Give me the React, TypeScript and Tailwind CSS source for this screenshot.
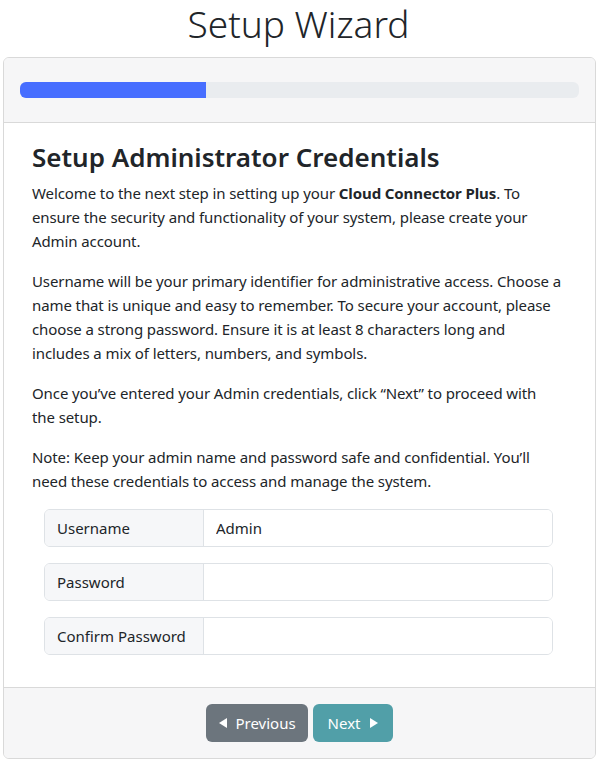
import React from "react";

const fields = [
  { label: "Username", value: "Admin", type: "text" },
  { label: "Password", value: "", type: "password" },
  { label: "Confirm Password", value: "", type: "password" },
];

function Triangle({ dir }: { dir: "left" | "right" }) {
  return (
    <svg width="8" height="10" viewBox="0 0 8 10" className="inline-block" fill="currentColor">
      {dir === "left" ? <path d="M8 0 L0 5 L8 10 Z" /> : <path d="M0 0 L8 5 L0 10 Z" />}
    </svg>
  );
}

export default function App() {
  return (
    <div
      className="min-h-[760px] bg-white text-[#212529]"
      style={{ fontFamily: '"Noto Sans", "Open Sans", sans-serif' }}
    >
      <h1 className="text-center text-[37px] leading-[48px] font-light mb-[9px]">Setup Wizard</h1>

      <div className="ml-[3px] mr-[1px] border border-[#d9d9d9] rounded-md overflow-hidden">
        {/* progreso */}
        <div className="bg-[#f6f6f7] px-4 py-6 border-b border-[#d9d9d9]">
          <div className="h-4 rounded-md bg-[#e9ecef] overflow-hidden">
            <div className="h-full w-1/3 bg-[#476eff]" />
          </div>
        </div>

        <div className="bg-white px-7 pt-[18px] pb-4">
          <h2 className="text-[26px] leading-8 font-semibold mb-2">Setup Administrator Credentials</h2>
          <div className="text-[15px] leading-6 tracking-[-0.1px]">
            <p className="mb-4">
              Welcome to the next step in setting up your <strong className="font-bold">Cloud Connector Plus</strong>. To
              <br />
              ensure the security and functionality of your system, please create your
              <br />
              Admin account.
            </p>
            <p className="mb-4">
              Username will be your primary identifier for administrative access. Choose a
              <br />
              name that is unique and easy to remember. To secure your account, please
              <br />
              choose a strong password. Ensure it is at least 8 characters long and
              <br />
              includes a mix of letters, numbers, and symbols.
            </p>
            <p className="mb-4">
              Once you’ve entered your Admin credentials, click “Next” to proceed with
              <br />
              the setup.
            </p>
            <p className="mb-4">
              Note: Keep your admin name and password safe and confidential. You’ll
              <br />
              need these credentials to access and manage the system.
            </p>
          </div>

          <div className="pl-3 pr-[14px] flex flex-col gap-4 mb-4">
            {fields.map((f) => (
              <div key={f.label} className="flex h-[38px] rounded-md border border-[#dee2e6] overflow-hidden">
                <span className="w-[159px] shrink-0 flex items-center px-3 bg-[#f6f7f9] border-r border-[#dee2e6] text-[15px] whitespace-nowrap">
                  {f.label}
                </span>
                <input
                  type={f.type}
                  defaultValue={f.value}
                  className="flex-1 min-w-0 px-3 text-[15px] outline-none bg-white text-[#212529]"
                  style={{ fontFamily: "inherit" }}
                />
              </div>
            ))}
          </div>
        </div>

        <div className="bg-[#f6f6f7] border-t border-[#d9d9d9] py-4 flex justify-center gap-[5px]">
          <button className="h-[38px] pl-[13px] pr-[12px] rounded-md bg-[#6c757d] text-white text-[15px] flex items-center gap-[8px]">
            <Triangle dir="left" />
            Previous
          </button>
          <button className="h-[38px] pl-[15px] pr-[15px] rounded-md bg-[#519fa8] text-white text-[15px] flex items-center gap-[9px]">
            Next
            <Triangle dir="right" />
          </button>
        </div>
      </div>
    </div>
  );
}
